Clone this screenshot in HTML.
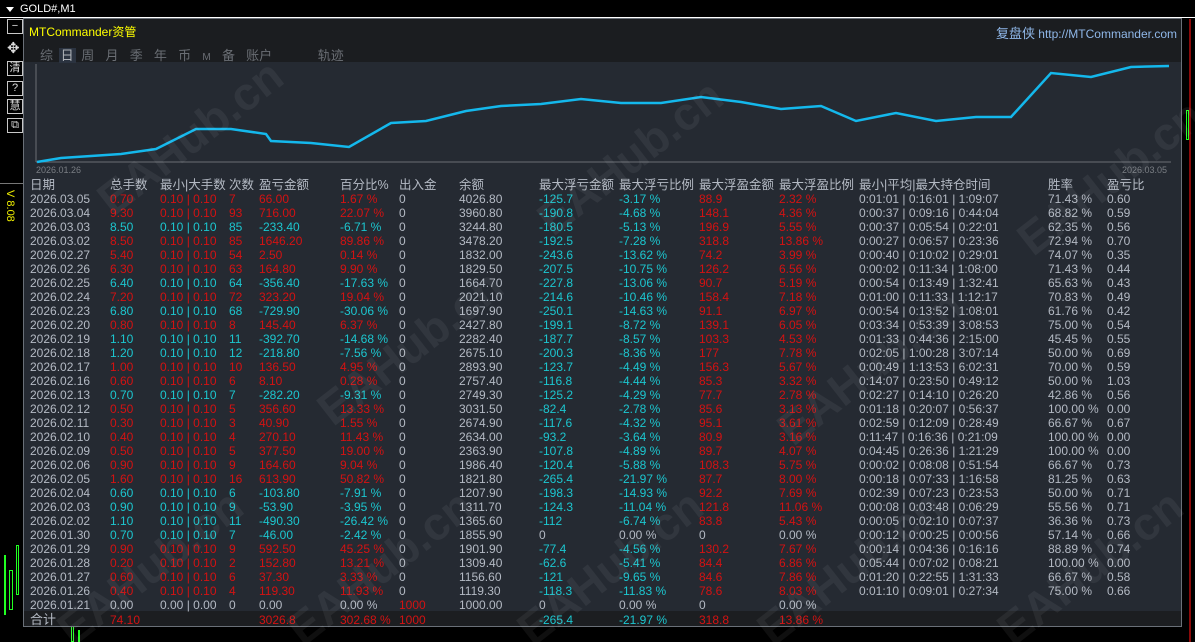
<!DOCTYPE html>
<html style="width:1195px;height:642px;overflow:hidden"><head><meta charset="utf-8"><style>
*{margin:0;padding:0;box-sizing:border-box}
body{width:1195px;height:642px;background:#000;position:relative;overflow:hidden;font-family:"Liberation Sans","Noto Sans CJK SC",sans-serif;color:#b4bac4}
.abs{position:absolute}
#top{left:0;top:0;width:1195px;height:18px;background:#000;border-bottom:1px solid #fff;color:#fff;font-size:11px;line-height:18px;padding-left:20px}
#top:before{content:"";position:absolute;left:6px;top:7px;border:4px solid transparent;border-top:5px solid #fff}
.btn{position:absolute;left:7px;width:16px;height:15px;border:1px solid #c8c8c8;color:#ddd;font-size:11px;line-height:13px;text-align:center}
#panel{left:23px;top:18px;width:1159px;height:609px;background:#252a32;border:1px solid #6a7078;overflow:hidden}
#hdr{left:0;top:0;width:100%;height:43px;background:#1b1d20}
#tw{position:absolute;left:6px;top:159px}
table{border-collapse:collapse;table-layout:fixed;font-size:12px}
td{height:14px;line-height:14px;white-space:nowrap;padding:0;overflow:visible}
tr.h td{font-size:12.5px;height:14px;color:#b4bac4}
.r{color:#d41212}.c{color:#1cc6cf}
.wm{position:absolute;color:rgba(255,255,255,0.06);font-size:46px;font-weight:bold;transform:rotate(-38deg);white-space:nowrap}
</style></head><body>
<div id="top" class="abs">GOLD#,M1</div>
<div class="abs" style="left:1189px;top:19px;width:2px;height:623px;background:#8a0a0a"></div>
<div class="abs" style="left:1186px;top:110px;width:3px;height:30px;border:1px solid #2f2;"></div>
<div class="btn" style="top:19px">−</div>
<div class="abs" style="left:7px;top:39px;color:#ddd;font-size:15px">✥</div>
<div class="btn" style="top:61px">清</div>
<div class="btn" style="top:81px">?</div>
<div class="btn" style="top:99px">慧</div>
<div class="btn" style="top:118px">⧉</div>
<div class="abs" style="left:0;top:183px;width:23px;height:1px;background:#777"></div>
<div class="abs" style="left:4px;top:190px;color:#ee0;font-size:11px;writing-mode:vertical-rl">V 8.08</div>
<div class="abs" style="left:4px;top:555px;width:2px;height:60px;background:#2f2"></div>
<div class="abs" style="left:9px;top:570px;width:4px;height:40px;border:1px solid #2f2"></div>
<div class="abs" style="left:16px;top:545px;width:3px;height:50px;border:1px solid #2f2"></div>
<div class="abs" style="left:71px;top:626px;width:3px;height:16px;border:1px solid #2f2"></div>
<div class="abs" style="left:78px;top:630px;width:2px;height:12px;background:#2f2"></div>
<div id="panel" class="abs">
<div id="hdr" class="abs"></div>
<div class="abs" style="left:0;top:592px;width:100%;height:17px;background:#1c1e21"></div>
<div class="abs" style="left:5px;top:4px;color:#ff0;font-size:12px">MTCommander资管</div>
<div class="abs" style="right:4px;top:4px;color:#8fb7e8;font-size:12px"><span style="font-size:13px">复盘侠</span> http://MTCommander.com</div>
<div class="abs" style="left:16px;top:26px;font-size:13px;color:#6a6e74;word-spacing:2px;white-space:nowrap">综 <span style="background:#2b3340;color:#b0b4ba;padding:0 2px">日</span> 周 &nbsp;月 &nbsp;季 &nbsp;年 &nbsp;币 &nbsp;<span style="font-size:10px">M</span> &nbsp;备 &nbsp;账户 <span style="margin-left:40px">轨迹</span></div>
<svg class="abs" style="left:0;top:0" width="1159" height="160">
<line x1="12" y1="45" x2="12" y2="143" stroke="#6a6e74"/>
<line x1="12" y1="143" x2="1147" y2="143" stroke="#6a6e74"/>
<polyline fill="none" stroke="#14b8ec" stroke-width="2.5" points="13,143 37,139 67,137 97,135 132,130 172,110 207,110 242,115 247,122 287,124 325,128 367,104 402,102 442,92 477,87 517,85 557,80 597,84 637,84 677,78 717,83 757,90 797,87 832,102 872,94 912,102 952,98 987,98 1027,54 1067,58 1107,48 1145,47"/>
<text x="12" y="154" fill="#7a7e84" font-size="9" font-family="Liberation Sans">2026.01.26</text>
<text x="1098" y="154" fill="#7a7e84" font-size="9" font-family="Liberation Sans">2026.03.05</text>
</svg>
<div id="tw"><table>
<colgroup><col style="width:80px"><col style="width:50px"><col style="width:69px"><col style="width:30px"><col style="width:81px"><col style="width:59px"><col style="width:60px"><col style="width:80px"><col style="width:80px"><col style="width:80px"><col style="width:80px"><col style="width:80px"><col style="width:189px"><col style="width:59px"><col style="width:60px"></colgroup>
<tr class="h"><td>日期</td><td>总手数</td><td>最小|大手数</td><td>次数</td><td>盈亏金额</td><td>百分比%</td><td>出入金</td><td>余额</td><td>最大浮亏金额</td><td>最大浮亏比例</td><td>最大浮盈金额</td><td>最大浮盈比例</td><td>最小|平均|最大持仓时间</td><td>胜率</td><td>盈亏比</td></tr>
<tr><td>2026.03.05</td><td class="r">0.70</td><td class="r">0.10 | 0.10</td><td class="r">7</td><td class="r">66.00</td><td class="r">1.67 %</td><td>0</td><td>4026.80</td><td class="c">-125.7</td><td class="c">-3.17 %</td><td class="r">88.9</td><td class="r">2.32 %</td><td>0:01:01 | 0:16:01 | 1:09:07</td><td>71.43 %</td><td>0.60</td></tr>
<tr><td>2026.03.04</td><td class="r">9.30</td><td class="r">0.10 | 0.10</td><td class="r">93</td><td class="r">716.00</td><td class="r">22.07 %</td><td>0</td><td>3960.80</td><td class="c">-190.8</td><td class="c">-4.68 %</td><td class="r">148.1</td><td class="r">4.36 %</td><td>0:00:37 | 0:09:16 | 0:44:04</td><td>68.82 %</td><td>0.59</td></tr>
<tr><td>2026.03.03</td><td class="c">8.50</td><td class="c">0.10 | 0.10</td><td class="c">85</td><td class="c">-233.40</td><td class="c">-6.71 %</td><td>0</td><td>3244.80</td><td class="c">-180.5</td><td class="c">-5.13 %</td><td class="r">196.9</td><td class="r">5.55 %</td><td>0:00:37 | 0:05:54 | 0:22:01</td><td>62.35 %</td><td>0.56</td></tr>
<tr><td>2026.03.02</td><td class="r">8.50</td><td class="r">0.10 | 0.10</td><td class="r">85</td><td class="r">1646.20</td><td class="r">89.86 %</td><td>0</td><td>3478.20</td><td class="c">-192.5</td><td class="c">-7.28 %</td><td class="r">318.8</td><td class="r">13.86 %</td><td>0:00:27 | 0:06:57 | 0:23:36</td><td>72.94 %</td><td>0.70</td></tr>
<tr><td>2026.02.27</td><td class="r">5.40</td><td class="r">0.10 | 0.10</td><td class="r">54</td><td class="r">2.50</td><td class="r">0.14 %</td><td>0</td><td>1832.00</td><td class="c">-243.6</td><td class="c">-13.62 %</td><td class="r">74.2</td><td class="r">3.99 %</td><td>0:00:40 | 0:10:02 | 0:29:01</td><td>74.07 %</td><td>0.35</td></tr>
<tr><td>2026.02.26</td><td class="r">6.30</td><td class="r">0.10 | 0.10</td><td class="r">63</td><td class="r">164.80</td><td class="r">9.90 %</td><td>0</td><td>1829.50</td><td class="c">-207.5</td><td class="c">-10.75 %</td><td class="r">126.2</td><td class="r">6.56 %</td><td>0:00:02 | 0:11:34 | 1:08:00</td><td>71.43 %</td><td>0.44</td></tr>
<tr><td>2026.02.25</td><td class="c">6.40</td><td class="c">0.10 | 0.10</td><td class="c">64</td><td class="c">-356.40</td><td class="c">-17.63 %</td><td>0</td><td>1664.70</td><td class="c">-227.8</td><td class="c">-13.06 %</td><td class="r">90.7</td><td class="r">5.19 %</td><td>0:00:54 | 0:13:49 | 1:32:41</td><td>65.63 %</td><td>0.43</td></tr>
<tr><td>2026.02.24</td><td class="r">7.20</td><td class="r">0.10 | 0.10</td><td class="r">72</td><td class="r">323.20</td><td class="r">19.04 %</td><td>0</td><td>2021.10</td><td class="c">-214.6</td><td class="c">-10.46 %</td><td class="r">158.4</td><td class="r">7.18 %</td><td>0:01:00 | 0:11:33 | 1:12:17</td><td>70.83 %</td><td>0.49</td></tr>
<tr><td>2026.02.23</td><td class="c">6.80</td><td class="c">0.10 | 0.10</td><td class="c">68</td><td class="c">-729.90</td><td class="c">-30.06 %</td><td>0</td><td>1697.90</td><td class="c">-250.1</td><td class="c">-14.63 %</td><td class="r">91.1</td><td class="r">6.97 %</td><td>0:00:54 | 0:13:52 | 1:08:01</td><td>61.76 %</td><td>0.42</td></tr>
<tr><td>2026.02.20</td><td class="r">0.80</td><td class="r">0.10 | 0.10</td><td class="r">8</td><td class="r">145.40</td><td class="r">6.37 %</td><td>0</td><td>2427.80</td><td class="c">-199.1</td><td class="c">-8.72 %</td><td class="r">139.1</td><td class="r">6.05 %</td><td>0:03:34 | 0:53:39 | 3:08:53</td><td>75.00 %</td><td>0.54</td></tr>
<tr><td>2026.02.19</td><td class="c">1.10</td><td class="c">0.10 | 0.10</td><td class="c">11</td><td class="c">-392.70</td><td class="c">-14.68 %</td><td>0</td><td>2282.40</td><td class="c">-187.7</td><td class="c">-8.57 %</td><td class="r">103.3</td><td class="r">4.53 %</td><td>0:01:33 | 0:44:36 | 2:15:00</td><td>45.45 %</td><td>0.55</td></tr>
<tr><td>2026.02.18</td><td class="c">1.20</td><td class="c">0.10 | 0.10</td><td class="c">12</td><td class="c">-218.80</td><td class="c">-7.56 %</td><td>0</td><td>2675.10</td><td class="c">-200.3</td><td class="c">-8.36 %</td><td class="r">177</td><td class="r">7.78 %</td><td>0:02:05 | 1:00:28 | 3:07:14</td><td>50.00 %</td><td>0.69</td></tr>
<tr><td>2026.02.17</td><td class="r">1.00</td><td class="r">0.10 | 0.10</td><td class="r">10</td><td class="r">136.50</td><td class="r">4.95 %</td><td>0</td><td>2893.90</td><td class="c">-123.7</td><td class="c">-4.49 %</td><td class="r">156.3</td><td class="r">5.67 %</td><td>0:00:49 | 1:13:53 | 6:02:31</td><td>70.00 %</td><td>0.59</td></tr>
<tr><td>2026.02.16</td><td class="r">0.60</td><td class="r">0.10 | 0.10</td><td class="r">6</td><td class="r">8.10</td><td class="r">0.28 %</td><td>0</td><td>2757.40</td><td class="c">-116.8</td><td class="c">-4.44 %</td><td class="r">85.3</td><td class="r">3.32 %</td><td>0:14:07 | 0:23:50 | 0:49:12</td><td>50.00 %</td><td>1.03</td></tr>
<tr><td>2026.02.13</td><td class="c">0.70</td><td class="c">0.10 | 0.10</td><td class="c">7</td><td class="c">-282.20</td><td class="c">-9.31 %</td><td>0</td><td>2749.30</td><td class="c">-125.2</td><td class="c">-4.29 %</td><td class="r">77.7</td><td class="r">2.78 %</td><td>0:02:27 | 0:14:10 | 0:26:20</td><td>42.86 %</td><td>0.56</td></tr>
<tr><td>2026.02.12</td><td class="r">0.50</td><td class="r">0.10 | 0.10</td><td class="r">5</td><td class="r">356.60</td><td class="r">13.33 %</td><td>0</td><td>3031.50</td><td class="c">-82.4</td><td class="c">-2.78 %</td><td class="r">85.6</td><td class="r">3.13 %</td><td>0:01:18 | 0:20:07 | 0:56:37</td><td>100.00 %</td><td>0.00</td></tr>
<tr><td>2026.02.11</td><td class="r">0.30</td><td class="r">0.10 | 0.10</td><td class="r">3</td><td class="r">40.90</td><td class="r">1.55 %</td><td>0</td><td>2674.90</td><td class="c">-117.6</td><td class="c">-4.32 %</td><td class="r">95.1</td><td class="r">3.61 %</td><td>0:02:59 | 0:12:09 | 0:28:49</td><td>66.67 %</td><td>0.67</td></tr>
<tr><td>2026.02.10</td><td class="r">0.40</td><td class="r">0.10 | 0.10</td><td class="r">4</td><td class="r">270.10</td><td class="r">11.43 %</td><td>0</td><td>2634.00</td><td class="c">-93.2</td><td class="c">-3.64 %</td><td class="r">80.9</td><td class="r">3.16 %</td><td>0:11:47 | 0:16:36 | 0:21:09</td><td>100.00 %</td><td>0.00</td></tr>
<tr><td>2026.02.09</td><td class="r">0.50</td><td class="r">0.10 | 0.10</td><td class="r">5</td><td class="r">377.50</td><td class="r">19.00 %</td><td>0</td><td>2363.90</td><td class="c">-107.8</td><td class="c">-4.89 %</td><td class="r">89.7</td><td class="r">4.07 %</td><td>0:04:45 | 0:26:36 | 1:21:29</td><td>100.00 %</td><td>0.00</td></tr>
<tr><td>2026.02.06</td><td class="r">0.90</td><td class="r">0.10 | 0.10</td><td class="r">9</td><td class="r">164.60</td><td class="r">9.04 %</td><td>0</td><td>1986.40</td><td class="c">-120.4</td><td class="c">-5.88 %</td><td class="r">108.3</td><td class="r">5.75 %</td><td>0:00:02 | 0:08:08 | 0:51:54</td><td>66.67 %</td><td>0.73</td></tr>
<tr><td>2026.02.05</td><td class="r">1.60</td><td class="r">0.10 | 0.10</td><td class="r">16</td><td class="r">613.90</td><td class="r">50.82 %</td><td>0</td><td>1821.80</td><td class="c">-265.4</td><td class="c">-21.97 %</td><td class="r">87.7</td><td class="r">8.00 %</td><td>0:00:18 | 0:07:33 | 1:16:58</td><td>81.25 %</td><td>0.63</td></tr>
<tr><td>2026.02.04</td><td class="c">0.60</td><td class="c">0.10 | 0.10</td><td class="c">6</td><td class="c">-103.80</td><td class="c">-7.91 %</td><td>0</td><td>1207.90</td><td class="c">-198.3</td><td class="c">-14.93 %</td><td class="r">92.2</td><td class="r">7.69 %</td><td>0:02:39 | 0:07:23 | 0:23:53</td><td>50.00 %</td><td>0.71</td></tr>
<tr><td>2026.02.03</td><td class="c">0.90</td><td class="c">0.10 | 0.10</td><td class="c">9</td><td class="c">-53.90</td><td class="c">-3.95 %</td><td>0</td><td>1311.70</td><td class="c">-124.3</td><td class="c">-11.04 %</td><td class="r">121.8</td><td class="r">11.06 %</td><td>0:00:08 | 0:03:48 | 0:06:29</td><td>55.56 %</td><td>0.71</td></tr>
<tr><td>2026.02.02</td><td class="c">1.10</td><td class="c">0.10 | 0.10</td><td class="c">11</td><td class="c">-490.30</td><td class="c">-26.42 %</td><td>0</td><td>1365.60</td><td class="c">-112</td><td class="c">-6.74 %</td><td class="r">83.8</td><td class="r">5.43 %</td><td>0:00:05 | 0:02:10 | 0:07:37</td><td>36.36 %</td><td>0.73</td></tr>
<tr><td>2026.01.30</td><td class="c">0.70</td><td class="c">0.10 | 0.10</td><td class="c">7</td><td class="c">-46.00</td><td class="c">-2.42 %</td><td>0</td><td>1855.90</td><td>0</td><td>0.00 %</td><td>0</td><td>0.00 %</td><td>0:00:12 | 0:00:25 | 0:00:56</td><td>57.14 %</td><td>0.66</td></tr>
<tr><td>2026.01.29</td><td class="r">0.90</td><td class="r">0.10 | 0.10</td><td class="r">9</td><td class="r">592.50</td><td class="r">45.25 %</td><td>0</td><td>1901.90</td><td class="c">-77.4</td><td class="c">-4.56 %</td><td class="r">130.2</td><td class="r">7.67 %</td><td>0:00:14 | 0:04:36 | 0:16:16</td><td>88.89 %</td><td>0.74</td></tr>
<tr><td>2026.01.28</td><td class="r">0.20</td><td class="r">0.10 | 0.10</td><td class="r">2</td><td class="r">152.80</td><td class="r">13.21 %</td><td>0</td><td>1309.40</td><td class="c">-62.6</td><td class="c">-5.41 %</td><td class="r">84.4</td><td class="r">6.86 %</td><td>0:05:44 | 0:07:02 | 0:08:21</td><td>100.00 %</td><td>0.00</td></tr>
<tr><td>2026.01.27</td><td class="r">0.60</td><td class="r">0.10 | 0.10</td><td class="r">6</td><td class="r">37.30</td><td class="r">3.33 %</td><td>0</td><td>1156.60</td><td class="c">-121</td><td class="c">-9.65 %</td><td class="r">84.6</td><td class="r">7.86 %</td><td>0:01:20 | 0:22:55 | 1:31:33</td><td>66.67 %</td><td>0.58</td></tr>
<tr><td>2026.01.26</td><td class="r">0.40</td><td class="r">0.10 | 0.10</td><td class="r">4</td><td class="r">119.30</td><td class="r">11.93 %</td><td>0</td><td>1119.30</td><td class="c">-118.3</td><td class="c">-11.83 %</td><td class="r">78.6</td><td class="r">8.03 %</td><td>0:01:10 | 0:09:01 | 0:27:34</td><td>75.00 %</td><td>0.66</td></tr>
<tr><td>2026.01.21</td><td>0.00</td><td>0.00 | 0.00</td><td>0</td><td>0.00</td><td>0.00 %</td><td class="r">1000</td><td>1000.00</td><td>0</td><td>0.00 %</td><td>0</td><td>0.00 %</td><td></td><td></td><td></td></tr>
<tr style="height:16px"><td style="font-size:13px;line-height:16px">合计</td><td class="r">74.10</td><td></td><td></td><td class="r">3026.8</td><td class="r">302.68 %</td><td class="r">1000</td><td></td><td class="c">-265.4</td><td class="c">-21.97 %</td><td class="r">318.8</td><td class="r">13.86 %</td><td></td><td></td><td></td></tr>
</table></div>
</div>
<div class="wm" style="left:80px;top:110px">EAHub.cn</div>
<div class="wm" style="left:300px;top:320px">EAHub.cn</div>
<div class="wm" style="left:520px;top:130px">EAHub.cn</div>
<div class="wm" style="left:760px;top:340px">EAHub.cn</div>
<div class="wm" style="left:1000px;top:150px">EAHub.cn</div>
<div class="wm" style="left:40px;top:540px">EAHub.cn</div>
<div class="wm" style="left:270px;top:540px">EAHub.cn</div>
<div class="wm" style="left:500px;top:540px">EAHub.cn</div>
<div class="wm" style="left:740px;top:540px">EAHub.cn</div>
<div class="wm" style="left:980px;top:540px">EAHub.cn</div>
</body></html>
